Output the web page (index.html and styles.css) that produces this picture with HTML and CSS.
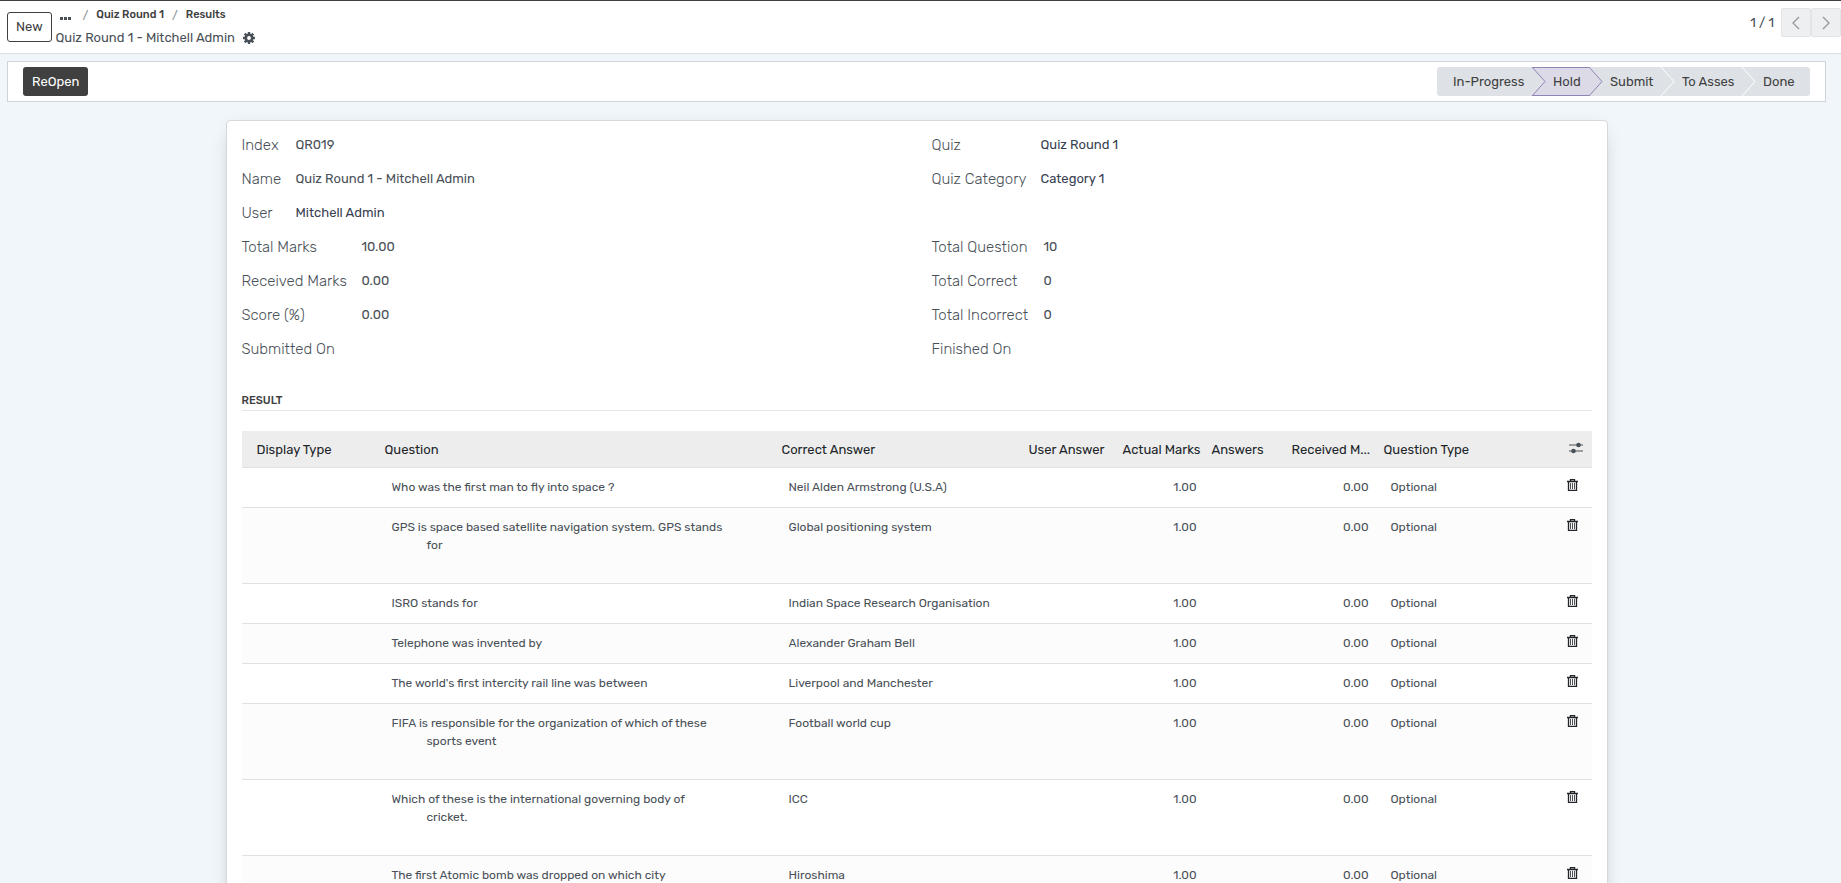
FILE: index.html
```
<!DOCTYPE html>
<html lang="en">
<head>
  <meta charset="UTF-8">
  <meta name="viewport" content="width=device-width, initial-scale=1.0">
  <title>Quiz Round 1 - Mitchell Admin</title>
  <link rel="stylesheet" href="styles.css">
</head>
<body>
  <!-- shared icons -->
  <svg class="sprite" aria-hidden="true">
    <symbol id="trash" viewBox="0 0 11 12">
      <path d="M0 2.500h11M3.500 2.500V.7h4v1.800M1.500 3v8.400h8V3" fill="none" stroke="currentColor" stroke-width="1.300"/>
      <path d="M3.500 4v6M5.500 4v6M7.500 4v6" fill="none" stroke="currentColor" stroke-width=".8"/>
    </symbol>
  </svg>

  <header class="control-panel">
    <button type="button" class="btn-new">New</button>
    <div class="titles">
      <nav class="breadcrumb" aria-label="Breadcrumb">
        <button type="button" class="dots" aria-label="More">
          <svg width="11" height="3" viewBox="0 0 11 3"><path d="M0 0h3v3H0zM4 0h3v3H4zM8 0h3v3H8z" fill="currentColor"/></svg>
        </button>
        <span class="slash">/</span>
        <a href="#">Quiz Round 1</a>
        <span class="slash">/</span>
        <a href="#">Results</a>
      </nav>
      <div class="current">
        <span>Quiz Round 1 - Mitchell Admin</span>
        <button type="button" class="gear" aria-label="Actions">
          <svg width="12" height="12" viewBox="0 0 12 12">
            <circle cx="6" cy="6" r="3.200" fill="none" stroke="currentColor" stroke-width="2.600"/>
            <path d="M6 0v2.400M6 9.600v2.400M0 6h2.400M9.600 6H12M1.700 1.700l1.700 1.700M8.600 8.600l1.700 1.700M1.700 10.300l1.700-1.700M8.600 3.400l1.700-1.700" stroke="currentColor" stroke-width="2.400"/>
          </svg>
        </button>
      </div>
    </div>
    <div class="pager">
      <span>1 / 1</span>
      <button type="button" disabled aria-label="Previous"><svg width="8" height="14" viewBox="0 0 8 14"><path d="M7 1L1 7l6 6"/></svg></button>
      <button type="button" disabled aria-label="Next"><svg width="8" height="14" viewBox="0 0 8 14"><path d="M1 1l6 6-6 6"/></svg></button>
    </div>
  </header>

  <main class="content">
    <div class="statusbar">
      <button type="button" class="btn-primary">ReOpen</button>
      <div class="stages">
        <button type="button" class="stage before-active">In-Progress<svg width="15" height="29" viewBox="0 0 15 29"><path d="M0 0L13 14.500 0 29"/></svg></button>
        <button type="button" class="stage active" aria-current="step">Hold<svg width="15" height="29" viewBox="0 0 15 29"><path d="M0 0L13 14.500 0 29"/></svg></button>
        <button type="button" class="stage">Submit<svg width="15" height="29" viewBox="0 0 15 29"><path d="M0 0L13 14.500 0 29"/></svg></button>
        <button type="button" class="stage">To Asses<svg width="15" height="29" viewBox="0 0 15 29"><path d="M0 0L13 14.500 0 29"/></svg></button>
        <button type="button" class="stage">Done</button>
      </div>
    </div>

    <section class="sheet">
      <div class="groups">
        <dl class="fields narrow">
          <dt>Index</dt><dd>QR019</dd>
          <dt>Name</dt><dd>Quiz Round 1 - Mitchell Admin</dd>
          <dt>User</dt><dd><a href="#">Mitchell Admin</a></dd>
        </dl>
        <dl class="fields">
          <dt>Quiz</dt><dd><a href="#">Quiz Round 1</a></dd>
          <dt>Quiz Category</dt><dd><a href="#">Category 1</a></dd>
        </dl>
        <dl class="fields wide">
          <dt>Total Marks</dt><dd>10.00</dd>
          <dt>Received Marks</dt><dd>0.00</dd>
          <dt>Score (%)</dt><dd>0.00</dd>
          <dt>Submitted On</dt><dd></dd>
        </dl>
        <dl class="fields totals">
          <dt>Total Question</dt><dd>10</dd>
          <dt>Total Correct</dt><dd>0</dd>
          <dt>Total Incorrect</dt><dd>0</dd>
          <dt>Finished On</dt><dd></dd>
        </dl>
      </div>

      <h2>Result</h2>

      <table class="lines">
        <colgroup>
          <col class="c-display"><col class="c-question"><col class="c-correct"><col class="c-user">
          <col class="c-actual"><col class="c-answers"><col class="c-received"><col class="c-type"><col class="c-action">
        </colgroup>
        <thead>
          <tr>
            <th>Display Type</th>
            <th>Question</th>
            <th>Correct Answer</th>
            <th>User Answer</th>
            <th>Actual Marks</th>
            <th>Answers</th>
            <th>Received M...</th>
            <th>Question Type</th>
            <th class="action">
              <button type="button" aria-label="Optional columns">
                <svg width="14" height="12" viewBox="0 0 14 12"><path d="M0 3h14M0 9h14" stroke="currentColor"/><circle cx="9.500" cy="3" r="2.300" fill="currentColor"/><circle cx="4.500" cy="9" r="2.300" fill="currentColor"/></svg>
              </button>
            </th>
          </tr>
        </thead>
        <tbody>
          <tr>
            <td></td><td>Who was the first man to fly into space ?</td><td>Neil Alden Armstrong (U.S.A)</td><td></td>
            <td class="num">1.00</td><td></td><td class="num">0.00</td><td>Optional</td>
            <td class="action"><button type="button" aria-label="Delete"><svg width="11" height="12"><use href="#trash"/></svg></button></td>
          </tr>
          <tr class="tall">
            <td></td><td>GPS is space based satellite navigation system. GPS stands<span class="more">for</span></td><td>Global positioning system</td><td></td>
            <td class="num">1.00</td><td></td><td class="num">0.00</td><td>Optional</td>
            <td class="action"><button type="button" aria-label="Delete"><svg width="11" height="12"><use href="#trash"/></svg></button></td>
          </tr>
          <tr>
            <td></td><td>ISRO stands for</td><td>Indian Space Research Organisation</td><td></td>
            <td class="num">1.00</td><td></td><td class="num">0.00</td><td>Optional</td>
            <td class="action"><button type="button" aria-label="Delete"><svg width="11" height="12"><use href="#trash"/></svg></button></td>
          </tr>
          <tr>
            <td></td><td>Telephone was invented by</td><td>Alexander Graham Bell</td><td></td>
            <td class="num">1.00</td><td></td><td class="num">0.00</td><td>Optional</td>
            <td class="action"><button type="button" aria-label="Delete"><svg width="11" height="12"><use href="#trash"/></svg></button></td>
          </tr>
          <tr>
            <td></td><td>The world's first intercity rail line was between</td><td>Liverpool and Manchester</td><td></td>
            <td class="num">1.00</td><td></td><td class="num">0.00</td><td>Optional</td>
            <td class="action"><button type="button" aria-label="Delete"><svg width="11" height="12"><use href="#trash"/></svg></button></td>
          </tr>
          <tr class="tall">
            <td></td><td>FIFA is responsible for the organization of which of these<span class="more">sports event</span></td><td>Football world cup</td><td></td>
            <td class="num">1.00</td><td></td><td class="num">0.00</td><td>Optional</td>
            <td class="action"><button type="button" aria-label="Delete"><svg width="11" height="12"><use href="#trash"/></svg></button></td>
          </tr>
          <tr class="tall">
            <td></td><td>Which of these is the international governing body of<span class="more">cricket.</span></td><td>ICC</td><td></td>
            <td class="num">1.00</td><td></td><td class="num">0.00</td><td>Optional</td>
            <td class="action"><button type="button" aria-label="Delete"><svg width="11" height="12"><use href="#trash"/></svg></button></td>
          </tr>
          <tr>
            <td></td><td>The first Atomic bomb was dropped on which city</td><td>Hiroshima</td><td></td>
            <td class="num">1.00</td><td></td><td class="num">0.00</td><td>Optional</td>
            <td class="action"><button type="button" aria-label="Delete"><svg width="11" height="12"><use href="#trash"/></svg></button></td>
          </tr>
        </tbody>
      </table>
    </section>
  </main>
</body>
</html>
```
FILE: styles.css
```
* {
  box-sizing: border-box;
}

body {
  margin: 0;
  height: 100vh;
  overflow: hidden;
  display: flex;
  flex-direction: column;
  font-family: Rubik, Roboto, sans-serif;
  font-size: 13px;
  line-height: 20px;
  color: #495057;
  background-color: #f1f6fa;
}

button {
  font: inherit;
  color: inherit;
  padding: 0;
  border: 0;
  background: none;
  cursor: pointer;
}

a {
  color: #374151;
  text-decoration: none;
}

svg {
  display: block;
}

.sprite {
  display: none;
}

/* top bar */
.control-panel {
  display: flex;
  align-items: flex-start;
  height: 54px;
  flex-shrink: 0;
  padding-left: 7px;
  background-color: #fff;
  border-top: 1px solid #404040;
  border-bottom: 1px solid #d8dfe6;
}

.btn-new {
  height: 30px;
  margin-top: 11px;
  padding: 0 8px;
  border: 1px solid #404040;
  border-radius: 3px;
  color: #404040;
}

.titles {
  padding: 4px 0 0 4px;
}

.breadcrumb {
  display: flex;
  align-items: center;
  gap: 8px;
  padding-left: 4px;
  font-size: 11px;
}

.breadcrumb a {
  font-weight: 500;
  color: #404040;
}

.dots {
  margin-right: 4px;
  padding-top: 6px;
}

.slash {
  font-size: 12px;
  color: #868e96;
}

.current {
  display: flex;
  align-items: center;
  gap: 8px;
  padding-top: 3px;
  font-size: 13px;
}

.pager {
  display: flex;
  align-items: center;
  margin: 7px 0 0 auto;
}

.pager span {
  margin-right: 7px;
}

.pager button {
  width: 30px;
  height: 29px;
  display: flex;
  align-items: center;
  justify-content: center;
  background-color: #eeeff1;
  border: 1px solid #e2e4e6;
  border-radius: 2px;
}

.pager path {
  fill: none;
  stroke: #96999c;
  stroke-width: 1.3;
}

/* body */
.content {
  flex: 1;
  min-height: 0;
  padding: 7px 15px 0 7px;
}

.statusbar {
  display: flex;
  justify-content: space-between;
  padding: 5px 15px;
  background-color: #fff;
  border: 1px solid #ced4da;
}

.btn-primary {
  height: 29px;
  padding: 0 9px;
  border-radius: 3px;
  background-color: #404040;
  color: #fff;
}

.stages {
  display: grid;
  grid-template-columns: 95px 57px 72px 81px 68px;
  border-radius: 3px;
  overflow: hidden;
}

.stage {
  position: relative;
  height: 29px;
  padding-left: 21px;
  text-align: left;
  white-space: nowrap;
  background-color: #dee2e6;
  color: #404040;
}

.stage:first-child {
  padding-left: 16px;
}

/* arrow tip, drawn over the next stage */
.stage svg {
  position: absolute;
  z-index: 1;
  top: 0;
  left: 100%;
}

.stage path {
  fill: #dee2e6;
  stroke: #fff;
}

.stage.active {
  background-color: #dddae8;
  box-shadow: inset 0 1px #8f84b5, inset 0 -1px #8f84b5;
}

.before-active path {
  stroke: #8f84b5;
}

.active path {
  fill: #dddae8;
  stroke: #8f84b5;
}

.sheet {
  max-width: 1382px;
  margin: 18px auto 0;
  padding: 7px 15px 40px;
  background-color: #fff;
  border: 1px solid #d5d7da;
  border-radius: 4px;
  box-shadow: 0 5px 20px -10px rgba(0, 0, 0, 0.4);
}

.groups {
  display: grid;
  grid-template-columns: 1fr 1fr;
  column-gap: 30px;
}

.fields {
  display: grid;
  grid-template-columns: 109px 1fr;
  grid-auto-rows: 34px;
  align-content: start;
  align-items: center;
  margin: 0;
}

.fields.narrow {
  grid-template-columns: 54px 1fr;
}

.fields.wide {
  grid-template-columns: 120px 1fr;
}

.fields.totals {
  grid-template-columns: 112px 1fr;
}

.fields dt {
  font-size: 15px;
  font-weight: 300;
  white-space: nowrap;
}

.fields dd {
  margin: 0;
}

h2 {
  margin: 26px 0 20px;
  font-size: 11px;
  line-height: 18px;
  font-weight: 500;
  text-transform: uppercase;
  color: #404040;
  border-bottom: 1px solid #e3e5e8;
}

/* result lines */
.lines {
  width: 100%;
  table-layout: fixed;
  border-collapse: collapse;
}

.c-display { width: 135px; }
.c-correct { width: 247px; }
.c-user { width: 94px; }
.c-actual { width: 89px; }
.c-answers { width: 80px; }
.c-received { width: 92px; }
.c-type { width: 176px; }
.c-action { width: 40px; }

.lines th {
  height: 36px;
  padding: 2px 0 0 8px;
  font-weight: 400;
  text-align: left;
  white-space: nowrap;
  color: #212529;
  background-color: #ededed;
  border-bottom: 1px solid #dee2e6;
}

.lines th:first-child {
  padding-left: 15px;
}

.lines td {
  height: 40px;
  padding: 10px 8px 11px 15px;
  font-size: 12px;
  line-height: 18px;
  vertical-align: top;
  white-space: nowrap;
  border-bottom: 1px solid #dee2e6;
}

.lines tbody tr:nth-child(even) {
  background-color: #fcfcfc;
}

.lines .tall td {
  height: 76px;
}

.more {
  display: block;
  padding-left: 35px;
}

.lines .num {
  padding-right: 7px;
  text-align: right;
}

.lines td.action {
  color: #212529;
}

.lines th.action {
  padding-left: 17px;
  color: #495057;
}
```
